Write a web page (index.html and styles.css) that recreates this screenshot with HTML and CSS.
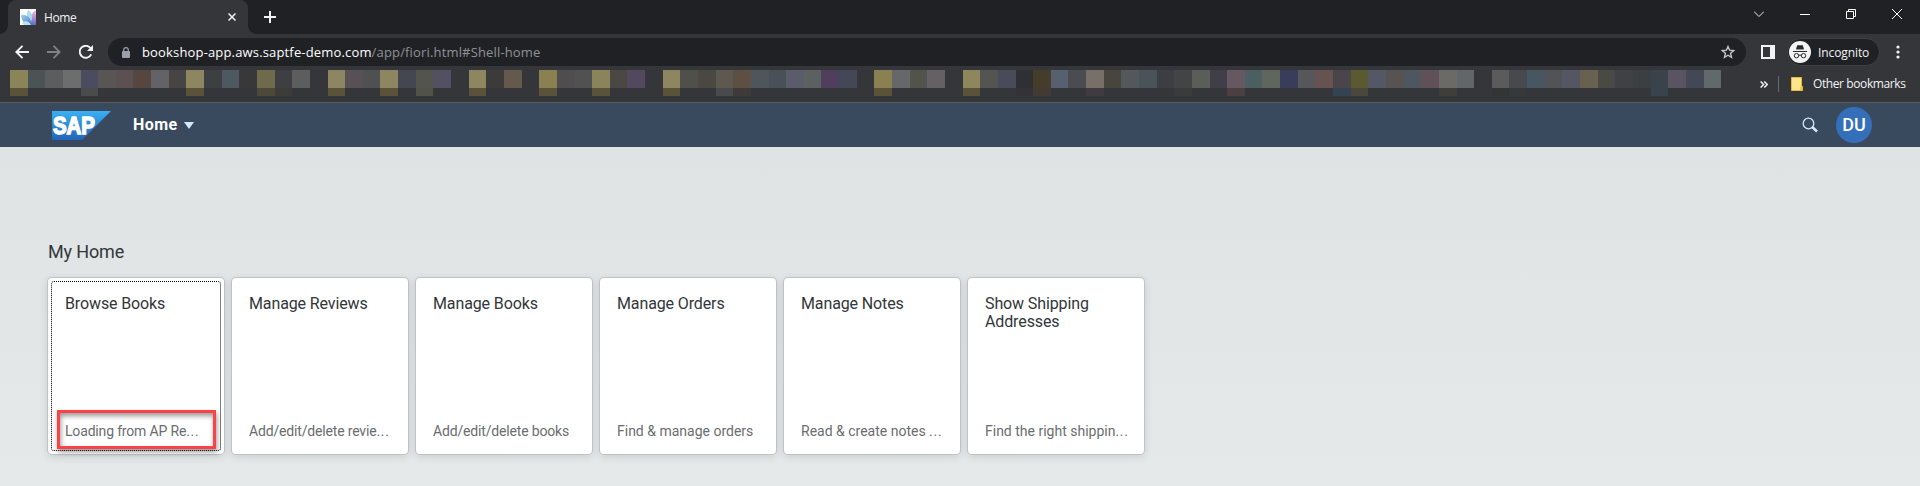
FILE: index.html
```html
<!DOCTYPE html>
<html lang="en">
<head>
<meta charset="utf-8">
<title>Home</title>
<link rel="stylesheet" href="styles.css">
</head>
<body>
<div class="tabstrip">
  <div class="tab">
    <svg class="favicon" width="16" height="16" viewBox="0 0 16 16">
      <defs><linearGradient id="fav" x1="0" y1="0" x2="1" y2="1"><stop offset="0" stop-color="#a5d3ee"/><stop offset="1" stop-color="#4a72c4"/></linearGradient>
      <linearGradient id="pink" x1="0" y1="0" x2="0" y2="1"><stop offset="0" stop-color="#ecc4e0"/><stop offset=".5" stop-color="#b58fd0"/><stop offset="1" stop-color="#5a6cc0"/></linearGradient></defs>
      <path fill="#fff" d="M0 0h16v16H0z"/>
      <path fill="url(#pink)" d="M16 1v15H9C9 9 11 4 16 1z"/>
      <path fill="#a9dcf2" d="M8 1c4 2 5 7 3 12C7 10 6 5 8 1z"/>
      <path fill="url(#fav)" d="M1 6c6-1 10 3 11 10H8C4 14 1 11 1 6z"/>
      <path fill="#b9e2f5" d="M2 14c3-3 7-2 9 2H4z"/>
    </svg>
    <span class="tab-title">Home</span>
    <svg class="tab-close" width="8" height="8" viewBox="0 0 8 8"><path d="M.5.5l7 7m0-7l-7 7"/></svg>
  </div>
  <svg class="new-tab" width="12" height="12" viewBox="0 0 12 12"><path d="M6 0v12M0 6h12"/></svg>
  <div class="window-controls">
    <svg width="10" height="10" viewBox="0 0 10 10"><path class="dim" d="M0 2.500l5 5 5-5"/></svg>
    <svg width="10" height="10" viewBox="0 0 10 10"><path d="M0 5.500h10"/></svg>
    <svg width="10" height="10" viewBox="0 0 10 10"><path d="M.5 2.500h7v7h-7zM2.500 2.500v-2h7v7h-2"/></svg>
    <svg width="10" height="10" viewBox="0 0 10 10"><path d="M0 0l10 10M10 0L0 10"/></svg>
  </div>
</div>

<div class="toolbar">
  <div class="nav">
    <svg width="14" height="14" viewBox="0 0 14 14"><path d="M14 7H1.500M7.500 .8L1.300 7l6.200 6.200"/></svg>
    <svg class="disabled" width="14" height="14" viewBox="0 0 14 14"><path d="M0 7h12.500M6.500 .8L12.700 7l-6.200 6.200"/></svg>
    <svg width="14" height="14" viewBox="0 0 14 14"><path d="M12.200 9.300A6 6 0 1 1 11.500 3.100L13 4.600"/><path class="solid" d="M14 0v6H8z"/></svg>
  </div>
  <div class="omnibox">
    <svg class="lock" width="8" height="11" viewBox="0 0 8 11"><path d="M1.700 5V3a2.300 2.300 0 0 1 4.600 0v2" fill="none" stroke="#9aa0a6" stroke-width="1.200"/><rect y="4" width="8" height="7" rx="1" fill="#9aa0a6"/></svg>
    <span class="url"><span class="host">bookshop-app.aws.saptfe-demo.com</span><span class="path">/app/fiori.html#Shell-home</span></span>
    <svg class="star" width="14" height="14" viewBox="0 0 14 14"><path d="M7 1.500l1.600 3.700 4.100.4-3.100 2.700.9 4L7 10.200l-3.500 2.100.9-4L1.300 5.600l4.100-.4z"/></svg>
  </div>
  <svg class="sidepanel" width="14" height="14" viewBox="0 0 14 14"><path fill="#f1f3f4" fill-rule="evenodd" d="M0 0h14v14H0zM2 2v10h7V2z"/></svg>
  <div class="incognito">
    <svg width="22" height="22" viewBox="0 0 22 22"><circle cx="11" cy="11" r="11" fill="#f1f3f4"/><path fill="#292a2d" d="M7 8.500l1.200-4.200h5.600L15 8.500zM4 10h14v1H4z"/><path fill="none" stroke="#292a2d" d="M9.500 14.500q1.500-1 3 0"/><circle cx="7.500" cy="14.700" r="2.200" fill="none" stroke="#292a2d"/><circle cx="14.500" cy="14.700" r="2.200" fill="none" stroke="#292a2d"/></svg>
    <span>Incognito</span>
  </div>
  <svg class="menu" width="4" height="14" viewBox="0 0 4 14"><circle cx="2" cy="2" r="1.600"/><circle cx="2" cy="7" r="1.600"/><circle cx="2" cy="12" r="1.600"/></svg>
</div>

<div class="bookmarks">
  <div class="blocks"></div>
  <svg class="more" width="8" height="7" viewBox="0 0 8 7"><path d="M.6.5l3 3-3 3M4.300.5l3 3-3 3"/></svg>
  <span class="separator"></span>
  <svg class="folder" width="12" height="14" viewBox="0 0 12 14"><path fill="#fde58b" stroke="#e8bd35" d="M.5.500h10v9h1v4H.5z"/><path fill="#f2c94c" d="M9 10h2v3H9z"/></svg>
  <span class="other">Other bookmarks</span>
</div>

<header class="shell">
  <svg class="logo" width="59" height="29" viewBox="0 0 59 29">
    <defs><linearGradient id="sap" x1="0" y1="0" x2="0" y2="1"><stop offset="0" stop-color="#3bb0f3"/><stop offset="1" stop-color="#2364b8"/></linearGradient></defs>
    <path fill="url(#sap)" d="M0 0h59L30 29H0z"/>
    <text x="1" y="23" textLength="42" lengthAdjust="spacingAndGlyphs">SAP</text>
  </svg>
  <span class="shell-title">Home</span>
  <svg class="caret" width="10" height="7" viewBox="0 0 10 7"><path fill="#d1e8ff" d="M0 0h10L5 7z"/></svg>
  <svg class="search" width="16" height="16" viewBox="0 0 16 16"><circle cx="6.500" cy="6.500" r="5.300"/><path class="handle" d="M10.200 10l4.800 4.500"/></svg>
  <span class="avatar">DU</span>
</header>

<main class="home">
  <h1>My Home</h1>
  <div class="tiles">
    <div class="tile focused"><h2>Browse Books</h2><p>Loading from AP Re<span class="dots">...</span></p><span class="callout"></span></div>
    <div class="tile"><h2>Manage Reviews</h2><p>Add/edit/delete revie<span class="dots">...</span></p></div>
    <div class="tile"><h2>Manage Books</h2><p>Add/edit/delete books</p></div>
    <div class="tile"><h2>Manage Orders</h2><p class="wide">Find &amp; manage orders</p></div>
    <div class="tile"><h2>Manage Notes</h2><p class="wide">Read &amp; create notes <span class="dots">...</span></p></div>
    <div class="tile"><h2>Show Shipping Addresses</h2><p class="wide">Find the right shippin<span class="dots">...</span></p></div>
  </div>
</main>
<script src="blocks.js"></script>
</body>
</html>
```
FILE: styles.css
```css
* { box-sizing: border-box; }
body {
  margin: 0;
  height: 486px;
  overflow: hidden;
  display: flex;
  flex-direction: column;
  background: #35363a;
  color: #f1f3f4;
  font: 12px "Open Sans", "Noto Sans", sans-serif;
}
svg { display: block; flex: none; }

/* Tab strip */
.tabstrip { display: flex; height: 34px; background: #202124; padding-left: 8px; align-items: center; }
.tab {
  position: relative;
  display: flex;
  align-items: center;
  width: 240px;
  height: 34px;
  padding: 0 12px;
  background: #35363a;
  border-radius: 8px 8px 0 0;
}
.tab::before, .tab::after {
  content: "";
  position: absolute;
  bottom: 0;
  width: 8px;
  height: 8px;
}
.tab::before { left: -8px; background: radial-gradient(circle at 0 0, #202124 7.500px, #35363a 8px); }
.tab::after { right: -8px; background: radial-gradient(circle at 100% 0, #202124 7.500px, #35363a 8px); }
.tab-title { margin-left: 8px; flex: 1; letter-spacing: -0.400px; }
.tab-close, .new-tab { fill: none; stroke: #f1f3f4; stroke-width: 1.500; }
.new-tab { margin-left: 16px; stroke-width: 2; }
.window-controls { margin-left: auto; padding: 0 18px 6px 0; display: flex; gap: 36px; }
.window-controls svg { fill: none; stroke: #fff; }
.window-controls .dim { stroke: #e8eaed; }

/* Address row */
.toolbar { display: flex; align-items: center; height: 36px; padding-left: 15px; }
.nav { display: flex; gap: 18px; width: 93px; }
.nav svg { fill: none; stroke: #f1f3f4; stroke-width: 1.900; }
.nav .disabled { stroke: #808185; }
.nav .solid { fill: #f1f3f4; stroke: none; }
.omnibox {
  display: flex;
  align-items: center;
  width: 1638px;
  height: 28px;
  padding: 0 11px 0 14px;
  border-radius: 14px;
  background: #202124;
}
.url { margin-left: 12px; flex: 1; font-size: 13px; white-space: nowrap; color: #8f9296; letter-spacing: 0.160px; }
.host { color: #fff; }
.star { fill: none; stroke: #c4c7ca; stroke-width: 1.400; }
.sidepanel { margin-left: 15px; }
.incognito {
  display: flex;
  align-items: center;
  gap: 7px;
  width: 93px;
  height: 28px;
  margin-left: 12px;
  padding-left: 1px;
  border: 1px solid #3f4044;
  border-radius: 14px;
  background: #202124;
  letter-spacing: -0.100px;
}
.menu { margin-left: 16px; fill: #f1f3f4; }

/* Bookmark row */
.bookmarks { display: flex; height: 33px; padding-left: 10px; border-bottom: 1px solid #5a5b5e; }
.blocks { display: grid; grid-template: 18px 8px / repeat(97, 17.650px); width: 1712px; }
.more { margin: 11px 0 0 38px; fill: none; stroke: #f1f3f4; stroke-width: 1.500; }
.separator { width: 1px; height: 16px; margin: 6px 12px 0 10px; background: #6a6b6f; }
.folder { margin-top: 7px; }
.other { margin: 6px 0 0 10px; line-height: 16px; white-space: nowrap; letter-spacing: -0.400px; }

/* Application shell */
.shell { display: flex; align-items: center; height: 44px; padding: 0 48px 0 52px; background: #394a5f; }
.logo text { fill: #fff; stroke: #fff; stroke-width: 1.500; font: bold 23px "Liberation Sans", Arial, sans-serif; }
.shell-title { margin: 0 0 2px 22px; width: 45px; font: bold 16px Roboto, sans-serif; letter-spacing: 0.450px; color: #fff; }
.caret { margin-left: 6px; }
.search { margin-left: auto; fill: none; stroke: #d1e8ff; stroke-width: 1.300; }
.search .handle { stroke-width: 2.500; }
.avatar {
  width: 36px;
  height: 36px;
  margin-left: 18px;
  border-radius: 50%;
  background: #346fba;
  color: #fff;
  font: 500 18px/36px Roboto, sans-serif;
  text-align: center;
}

/* Home page */
.home {
  flex: 1;
  padding: 93px 48px 0;
  background: linear-gradient(#dfe3e4, #e6e9ea);
  font-family: Roboto, sans-serif;
}
h1 { margin: 0 0 14px; font-size: 18px; line-height: 24px; font-weight: 400; letter-spacing: -0.150px; color: #32363a; }
.tiles { display: flex; gap: 8px; }
.tile {
  position: relative;
  display: flex;
  flex-direction: column;
  justify-content: space-between;
  width: 176px;
  height: 176px;
  padding: 17px 12px 15px 17px;
  border-radius: 4px;
  background: #fff;
  box-shadow: 0 0 0 1px #c0c3c5, 0 2px 8px rgba(70, 75, 80, .2);
}
.tile h2 { margin: 0; font-size: 16px; line-height: 18px; font-weight: 400; letter-spacing: -0.120px; color: #32363a; }
.tile p { margin: 0; font-size: 14px; line-height: 16px; letter-spacing: -0.170px; color: #6a6d70; white-space: nowrap; }
.tile .wide { letter-spacing: 0; }
.tile .dots { letter-spacing: 0.700px; }
.focused::before { content: ""; position: absolute; inset: 3px; border: 1px dotted #000; border-radius: 3px; }
.callout {
  position: absolute;
  left: 9px;
  top: 132px;
  width: 159px;
  height: 39px;
  border: 3px solid #fb4346;
  box-shadow: 1px 3px 5px rgba(0, 0, 0, .4), inset 1px 3px 5px rgba(0, 0, 0, .4);
}
```
FILE: blocks.js
```js
// Colours of the obscured bookmark labels; "-" leaves a gap.
const upper = `8b8459 4b5355 5c5d5f 6b6e6d 4b4c5f 5a5555 5d5053 57463f 626267 464544 8e8660 3e3f42 4d5860 38383a 6e6a4b 3e3f43 5d5d5d -
8e8660 575156 4f5051 8e8660 444652 53544b 535063 - 8e8660 3b3b3a 64594c - 8a8052 504d4e 515151 8b845a 4b4742 52495f -
8e8660 4f504c 494843 5e5850 5d5042 4e555b 485158 5a5c6b 5b6060 503f5c 444757 - 8a8052 666769 52534a 656063 -
8e865c 545453 494b5b 2f3034 463c2a 566070 4b4c4f 786f69 48443e 54585b 48535a 3c3e41 424446 5b5d59 403f49 655861 4b5f61 5f665b 3a3c5b 57565b 675252 4a4548 5b5930 545766 565352 4e565f 5f5157
6b6a67 636669 - 5b5b5c 474a4c 485661 525356 545663 696150 494a44 3f4144 3c3f42 39434c 5a5361 434756 606a6a`.split(/\s+/);
const lower = { 4: "4b4b4e", 14: "4d4938", 15: "3e3c38", 23: "515349", 40: "494a4e", 41: "3e3a3a", 57: "343236", 58: "433a33", 61: "3f3b3f", 66: "3a3b3d", 69: "4c3f41", 75: "344351", 76: "4a483b", 81: "3f3e3b", 84: "333436", 85: "35393c", 93: "37434d" };
for (const i of [0, 10, 18, 21, 26, 30, 33, 37, 49, 54]) lower[i] = "5b5339";

const strip = document.querySelector(".blocks");
function addCell(column, row, colour) {
  const cell = document.createElement("i");
  cell.style.gridArea = `${row} / ${column + 1}`;
  cell.style.background = `#${colour}`;
  strip.append(cell);
}
// Cell numbers in the list count from the left edge, gaps included.
upper.forEach((colour, i) => { if (colour !== "-") addCell(i, 1, colour); });
Object.entries(lower).forEach(([i, colour]) => addCell(Number(i), 2, colour));
```
